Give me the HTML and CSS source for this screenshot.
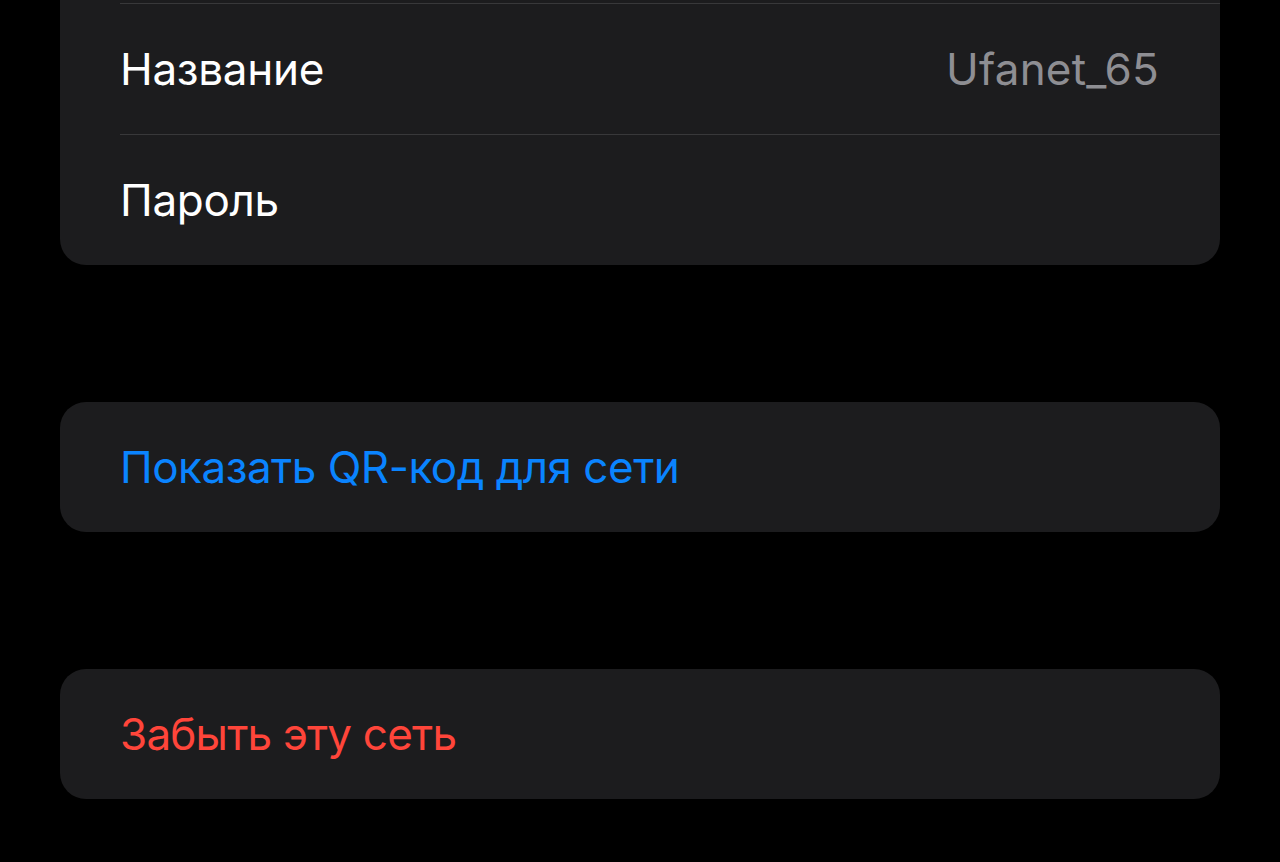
FILE: index.html
```html
<!DOCTYPE html>
<html lang="ru">
<head>
<meta charset="utf-8">
<title>Wi-Fi</title>
<link rel="stylesheet" href="styles.css">
</head>
<body>
<main class="page">
  <section class="card card-top">
    <div class="row">
      <span class="label">Название</span>
      <span class="value">Ufanet_65</span>
    </div>
    <div class="row">
      <span class="label">Пароль</span>
    </div>
  </section>
  <section class="card">
    <div class="row row-single">
      <span class="action action-blue">Показать QR-код для сети</span>
    </div>
  </section>
  <section class="card">
    <div class="row row-single">
      <span class="action action-red">Забыть эту сеть</span>
    </div>
  </section>
</main>
</body>
</html>
```
FILE: styles.css
```css
html, body {
  margin: 0;
  padding: 0;
  background: #000;
  height: 100%;
  overflow: hidden;
}
body {
  font-family: Inter, "Noto Sans", "Liberation Sans", sans-serif;
  -webkit-font-smoothing: antialiased;
}
.page {
  display: flex;
  flex-direction: column;
  gap: 137px;
  padding: 0 60px;
}
.card {
  background: #1c1c1e;
  border-radius: 26px;
  overflow: hidden;
}
.card-top {
  border-radius: 0 0 26px 26px;
  padding-top: 3px;
}
.row {
  height: 130px;
  margin-left: 60px;
  padding-right: 61px;
  display: flex;
  align-items: center;
  justify-content: space-between;
}
.card-top .row {
  border-top: 1px solid #38383a;
}
.row-single {
  height: 130px;
}
.label {
  color: #fff;
  font-size: 44px;
  letter-spacing: -0.3px;
}
.value {
  color: #8e8e93;
  font-size: 44px;
  letter-spacing: 0.2px;
}
.action {
  font-size: 44px;
  letter-spacing: -0.5px;
}
.action-blue { color: #0a84ff; }
.action-red { color: #ff453a; letter-spacing: -0.8px; }
```
